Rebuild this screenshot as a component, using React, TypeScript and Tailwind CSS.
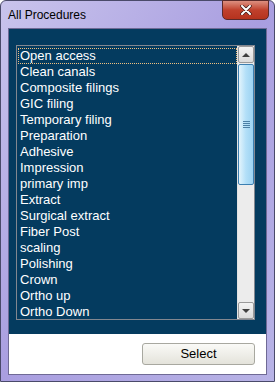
const procedures = [
  "Open access",
  "Clean canals",
  "Composite filings",
  "GIC filing",
  "Temporary filing",
  "Preparation",
  "Adhesive",
  "Impression",
  "primary imp",
  "Extract",
  "Surgical extract",
  "Fiber Post",
  "scaling",
  "Polishing",
  "Crown",
  "Ortho up",
  "Ortho Down",
];

function ScrollBar() {
  return (
    <div className="flex w-[17px] shrink-0 flex-col bg-[#ececec] border-l border-[#e3e3e3]">
      {/* up arrow */}
      <div className="flex h-[17px] items-center justify-center border border-[#9a9a9a] rounded-[2px] bg-gradient-to-b from-[#f4f4f4] to-[#dcdcdc]">
        <div className="h-0 w-0 border-x-[4px] border-b-[4px] border-x-transparent border-b-[#404040]" />
      </div>
      {/* thumb */}
      <div className="mt-[1px] flex h-[121px] items-center justify-center rounded-[2px] border border-[#3c7fb1] bg-gradient-to-r from-[#e3f4fc] via-[#b2dff8] to-[#9cd2f1]">
        <div className="flex flex-col gap-[1px]">
          <div className="h-[1px] w-[7px] bg-[#4b7fa5]" />
          <div className="h-[1px] w-[7px] bg-[#4b7fa5]" />
          <div className="h-[1px] w-[7px] bg-[#4b7fa5]" />
          <div className="h-[1px] w-[7px] bg-[#4b7fa5]" />
        </div>
      </div>
      <div className="flex-1" />
      {/* down arrow */}
      <div className="flex h-[17px] items-center justify-center border border-[#9a9a9a] rounded-[2px] bg-gradient-to-b from-[#f4f4f4] to-[#dcdcdc]">
        <div className="h-0 w-0 border-x-[4px] border-t-[4px] border-x-transparent border-t-[#404040]" />
      </div>
    </div>
  );
}

export default function App() {
  return (
    <div
      className="relative flex h-[382px] w-[275px] flex-col rounded-t-[6px] border border-[#4a4a6a] bg-gradient-to-br from-[#c9c4ec] via-[#a99ee0] to-[#b8b3e6]"
      style={{ fontFamily: '"Liberation Sans", Arial, sans-serif' }}
    >
      {/* Title bar */}
      <div className="flex h-[27px] shrink-0 items-center pl-[7px]">
        <span className="text-[12px] text-black">All Procedures</span>
      </div>
      <div className="absolute right-[5px] top-[-1px] flex h-[20px] w-[47px] items-center justify-center rounded-b-[5px] border border-[#5a2a2a] bg-gradient-to-b from-[#dc8f80] via-[#c0402c] to-[#b5331e]">
        <svg width="12" height="10" viewBox="0 0 12 10">
          <path d="M2 1 L10 9 M10 1 L2 9" stroke="#3a1a1a" strokeWidth="3.4" strokeLinecap="round" />
          <path d="M2 1 L10 9 M10 1 L2 9" stroke="#ffffff" strokeWidth="2" strokeLinecap="round" />
        </svg>
      </div>

      {/* Client area */}
      <div className="mx-[7px] flex flex-col border border-[#6f6a95]">
        <div className="flex h-[305px] flex-col bg-[#043b5f] pl-[7px] pr-[11px] pt-[16px]">
          <div className="flex h-[275px] border border-[#828790]">
            <div className="flex-1 overflow-hidden pl-[1px] pt-[2px]">
              {procedures.map((p, i) => (
                <div
                  key={p}
                  className={`h-[16px] pl-[2px] text-[13px] leading-[16px] text-white ${
                    i === 0 ? "outline outline-1 outline-dotted outline-[#f0c080] -outline-offset-1" : ""
                  }`}
                >
                  {p}
                </div>
              ))}
            </div>
            <ScrollBar />
          </div>
        </div>
        <div className="flex h-[40px] justify-end bg-white pr-[11px] pt-[9px]">
          <button className="h-[22px] w-[113px] rounded-[3px] border border-[#a8a8a0] bg-gradient-to-b from-[#fafaf7] to-[#e4e3db] text-[13px] text-black">
            Select
          </button>
        </div>
      </div>
    </div>
  );
}
